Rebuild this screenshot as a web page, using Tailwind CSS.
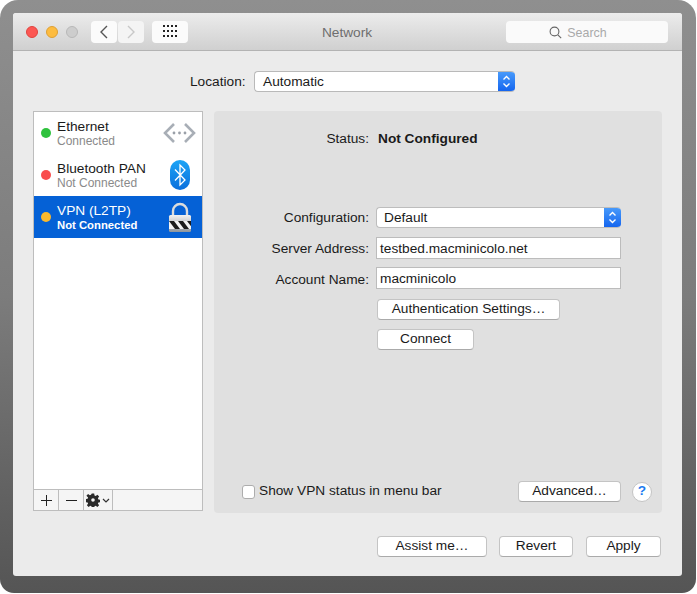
<!DOCTYPE html>
<html>
<head>
<meta charset="utf-8">
<script src="https://cdn.jsdelivr.net/npm/@tailwindcss/browser@4"></script>
</head>
<body class="bg-white">
<div class="w-[697px] h-[594px] overflow-hidden font-['Liberation_Sans',sans-serif] text-[13.7px] text-[#1a1a1a]">
  <div class="w-[696px] h-[593px] pt-[13px] pl-[13px] rounded-t-[18px] rounded-b-[14px] bg-gradient-to-b from-[#8f8f8f] via-[#7c7c7c] to-[#555555]">
    <div class="w-[669px] h-[563px] bg-[#ebebeb] rounded-[3px] flex flex-col overflow-hidden">
      <!-- Title bar -->
      <div class="h-[38px] shrink-0 flex items-center pl-[13px] pr-[14px] border-b border-[#b3b3b3] bg-gradient-to-b from-[#ececec] to-[#d0d0d0]">
        <div class="flex gap-2 items-center">
          <div class="w-3 h-3 rounded-full bg-[#fc5753] border border-[#e0443e]"></div>
          <div class="w-3 h-3 rounded-full bg-[#fdbc40] border border-[#dea034]"></div>
          <div class="w-3 h-3 rounded-full bg-[#cdcdcd] border border-[#b8b8b8]"></div>
        </div>
        <div class="ml-[13px] flex gap-px">
          <button class="w-[26px] h-[22px] rounded-[4px] bg-[#fbfbfb] flex items-center justify-center">
            <svg width="10" height="14" viewBox="0 0 10 14" fill="none" stroke="#555" stroke-width="1.4"><path d="M8 1 L2 7 L8 13"/></svg>
          </button>
          <button class="w-[26px] h-[22px] rounded-[4px] bg-[#f4f4f4] flex items-center justify-center">
            <svg width="10" height="14" viewBox="0 0 10 14" fill="none" stroke="#c8c8c8" stroke-width="1.4"><path d="M2 1 L8 7 L2 13"/></svg>
          </button>
        </div>
        <button class="ml-[8px] w-[36px] h-[22px] rounded-[4px] bg-[#fbfbfb] flex items-center justify-center">
          <svg width="15" height="13" viewBox="0 0 15 13" fill="#222"><rect x="0" y="0" width="2" height="2"/><rect x="4" y="0" width="2" height="2"/><rect x="8" y="0" width="2" height="2"/><rect x="12" y="0" width="2" height="2"/><rect x="0" y="5" width="2" height="2"/><rect x="4" y="5" width="2" height="2"/><rect x="8" y="5" width="2" height="2"/><rect x="12" y="5" width="2" height="2"/><rect x="0" y="10" width="2" height="2"/><rect x="4" y="10" width="2" height="2"/><rect x="8" y="10" width="2" height="2"/><rect x="12" y="10" width="2" height="2"/></svg>
        </button>
        <div class="flex-1 text-center text-[#6e6e6e] pt-[3px]">Network</div>
        <div class="w-[162px] h-[22px] rounded-[4px] bg-[#fafafa] flex items-center justify-center gap-[5px] pr-[18px] pt-[2px] text-[12.4px] text-[#a9a9a9]">
          <svg width="13" height="13" viewBox="0 0 13 13" fill="none" stroke="#666" stroke-width="1.1"><circle cx="5.5" cy="5.5" r="4.4"/><path d="M8.8 8.8 L12.2 12.2"/></svg>
          <span class="pt-[2px]">Search</span>
        </div>
      </div>
      <!-- Body -->
      <div class="flex-1 flex flex-col px-5">
        <!-- Location -->
        <div class="h-[21px] mt-[20px] flex items-center pl-[157px]">
          <span class="w-[56px] whitespace-nowrap pt-[2px]">Location:</span>
          <div class="ml-2 w-[261px] h-[21px] rounded-[4px] bg-white border border-[#b9b9b9] border-r-0 flex items-center justify-between pl-2 overflow-hidden">
            <span class="pt-[2px]">Automatic</span>
            <div class="w-[17px] h-[21px] bg-gradient-to-b from-[#4a9cfb] to-[#1262ee] flex items-center justify-center">
              <svg width="9" height="13" viewBox="0 0 9 13" fill="none" stroke="#fff" stroke-width="1.4"><path d="M1.5 4.5 L4.5 1.5 L7.5 4.5 M1.5 8.5 L4.5 11.5 L7.5 8.5"/></svg>
            </div>
          </div>
        </div>
        <div class="mt-[19px] flex gap-[11px] h-[402px]">
          <!-- List -->
          <div class="w-[170px] h-[400px] flex flex-col border border-[#bdbdbd] bg-white">
            <div class="h-[42px] flex items-center pl-[7px] pr-[6px]">
              <div class="w-[10px] h-[10px] rounded-full bg-[#2fc23d]"></div>
              <div class="ml-[6px] flex-1 leading-[15px] pt-[2px]"><div>Ethernet</div><div class="text-[12px] text-[#8a8a8a]">Connected</div></div>
              <svg width="33" height="22" viewBox="0 0 33 22" fill="none"><path d="M11 2 L2 11 L11 20 M22 2 L31 11 L22 20" stroke="#a8aeb6" stroke-width="2.6"/><circle cx="11" cy="11" r="1.4" fill="#9aa0a8"/><circle cx="16.5" cy="11" r="1.4" fill="#9aa0a8"/><circle cx="22" cy="11" r="1.4" fill="#9aa0a8"/></svg>
            </div>
            <div class="h-[42px] flex items-center pl-[7px] pr-[12px]">
              <div class="w-[10px] h-[10px] rounded-full bg-[#f94d4d]"></div>
              <div class="ml-[6px] flex-1 leading-[15px] pt-[2px]"><div>Bluetooth PAN</div><div class="text-[12px] text-[#8a8a8a]">Not Connected</div></div>
              <svg width="20" height="30" viewBox="0 0 20 30"><defs><linearGradient id="bt" x1="0" y1="0" x2="0" y2="1"><stop offset="0" stop-color="#1ba4f6"/><stop offset="1" stop-color="#0a6fdc"/></linearGradient></defs><rect width="20" height="30" rx="10" fill="url(#bt)"/><path d="M5 9.5 L15 20 L10 25 L10 5 L15 10 L5 20.5" fill="none" stroke="#fff" stroke-width="1.3"/></svg>
            </div>
            <div class="h-[42px] flex items-center pl-[7px] pr-[10px] bg-[#0561d6] text-white">
              <div class="w-[10px] h-[10px] rounded-full bg-[#fbb92d]"></div>
              <div class="ml-[6px] flex-1 leading-[15px] pt-[2px]"><div>VPN (L2TP)</div><div class="text-[11.3px] font-bold">Not Connected</div></div>
              <svg width="24" height="31" viewBox="0 0 24 31"><defs><linearGradient id="lk" x1="0" y1="0" x2="0" y2="1"><stop offset="0" stop-color="#f2f2f2"/><stop offset="1" stop-color="#8f959c"/></linearGradient></defs><path d="M5 14 V9 a7 7 0 0 1 14 0 V14" fill="none" stroke="#dcdcdc" stroke-width="2.4"/><rect x="1" y="13" width="22" height="17" rx="1.5" fill="url(#lk)"/><rect x="1" y="19" width="22" height="8" fill="#f4f4f4"/><path d="M1 19 H6 L12 27 H7 Z M10 19 H15 L21 27 H16 Z M19 19 H23 V24.3 Z" fill="#1c1c1c"/></svg>
            </div>
            <div class="flex-1"></div>
            <div class="h-[21px] flex border-t border-[#bdbdbd] bg-[#f5f5f5] items-center">
              <div class="w-[25px] h-full flex items-center justify-center border-r border-[#bdbdbd]"><svg width="13" height="13" viewBox="0 0 13 13" stroke="#222" stroke-width="1"><path d="M6.5 1 V12 M1 6.5 H12"/></svg></div>
              <div class="w-[25px] h-full flex items-center justify-center border-r border-[#bdbdbd]"><svg width="13" height="13" viewBox="0 0 13 13" stroke="#222" stroke-width="1"><path d="M1 6.5 H12"/></svg></div>
              <div class="w-[29px] h-full flex items-center justify-center gap-[2px] border-r border-[#bdbdbd]">
                <svg width="14" height="14" viewBox="0 0 14 14" fill="#2a2a2a"><path fill-rule="evenodd" d="M5.8 0.5h2.4l.3 2 1.2.5 1.7-1.2 1.7 1.7-1.2 1.7.5 1.2 2 .3v2.4l-2 .3-.5 1.2 1.2 1.7-1.7 1.7-1.7-1.2-1.2.5-.3 2H5.8l-.3-2-1.2-.5-1.7 1.2-1.7-1.7 1.2-1.7-.5-1.2-2-.3V6l2-.3.5-1.2L.4 2.8l1.7-1.7 1.7 1.2 1.2-.5zM7 5.2a1.8 1.8 0 1 0 0 3.6 1.8 1.8 0 0 0 0-3.6z"/></svg>
                <svg width="8" height="5" viewBox="0 0 8 5" fill="none" stroke="#333" stroke-width="1.2"><path d="M1 1 L4 4 L7 1"/></svg>
              </div>
            </div>
          </div>
          <!-- Panel -->
          <div class="w-[448px] bg-[#e0e0e0] rounded-[4px] flex flex-col pt-[19px]">
            <div class="flex h-[18px] items-center">
              <span class="w-[155px] text-right">Status:</span>
              <span class="ml-[9px] font-bold">Not Configured</span>
            </div>
            <div class="mt-[59px] flex h-[21px] items-center">
              <span class="w-[155px] text-right pt-[2px]">Configuration:</span>
              <div class="ml-[7px] w-[245px] h-[21px] rounded-[4px] bg-white border border-[#bdbdbd] border-r-0 flex items-center justify-between pl-[7px] overflow-hidden">
                <span class="pt-[2px]">Default</span>
                <div class="w-[17px] h-[21px] bg-gradient-to-b from-[#4a9cfb] to-[#1262ee] flex items-center justify-center">
                  <svg width="9" height="13" viewBox="0 0 9 13" fill="none" stroke="#fff" stroke-width="1.4"><path d="M1.5 4.5 L4.5 1.5 L7.5 4.5 M1.5 8.5 L4.5 11.5 L7.5 8.5"/></svg>
                </div>
              </div>
            </div>
            <div class="mt-[9px] flex h-[22px] items-center">
              <span class="w-[155px] text-right pt-[2px]">Server Address:</span>
              <div class="ml-[7px] w-[245px] h-[22px] bg-white border border-[#bcbcbc] flex items-center pl-[3px] pt-[2px]">testbed.macminicolo.net</div>
            </div>
            <div class="mt-[8px] flex h-[22px] items-center">
              <span class="w-[155px] text-right pt-[4px]">Account Name:</span>
              <div class="ml-[7px] w-[245px] h-[22px] bg-white border border-[#bcbcbc] flex items-center pl-[3px] pt-[2px]">macminicolo</div>
            </div>
            <div class="mt-[10px] pl-[163px]">
              <button class="w-[183px] h-[21px] rounded-[4px] bg-white border border-[#c4c4c4] border-b-[#aaa] flex items-center justify-center">Authentication Settings…</button>
            </div>
            <div class="mt-[9px] pl-[163px]">
              <button class="w-[97px] h-[21px] rounded-[4px] bg-white border border-[#c4c4c4] border-b-[#aaa] flex items-center justify-center">Connect</button>
            </div>
            <div class="mt-auto mb-[11px] flex items-center h-[21px] pl-[28px] pr-[10px]">
              <div class="w-[13px] h-[14px] rounded-[3px] bg-white border border-[#adadad]"></div>
              <span class="ml-[4px]">Show VPN status in menu bar</span>
              <button class="ml-auto w-[103px] h-[21px] rounded-[4px] bg-white border border-[#c4c4c4] border-b-[#aaa] flex items-center justify-center">Advanced…</button>
              <div class="ml-[11px] w-5 h-5 rounded-full bg-white border border-[#c4c4c4] flex items-center justify-center text-[#1a7bf0] font-bold">?</div>
            </div>
          </div>
        </div>
        <!-- Footer -->
        <div class="mt-[23px] flex justify-end pr-[1px]">
          <button class="w-[110px] h-[21px] rounded-[4px] bg-white border border-[#c4c4c4] border-b-[#aaa] flex items-center justify-center">Assist me…</button>
          <button class="ml-[12px] w-[74px] h-[21px] rounded-[4px] bg-white border border-[#c4c4c4] border-b-[#aaa] flex items-center justify-center">Revert</button>
          <button class="ml-[13px] w-[75px] h-[21px] rounded-[4px] bg-white border border-[#c4c4c4] border-b-[#aaa] flex items-center justify-center">Apply</button>
        </div>
      </div>
    </div>
  </div>
</div>
</body>
</html>
